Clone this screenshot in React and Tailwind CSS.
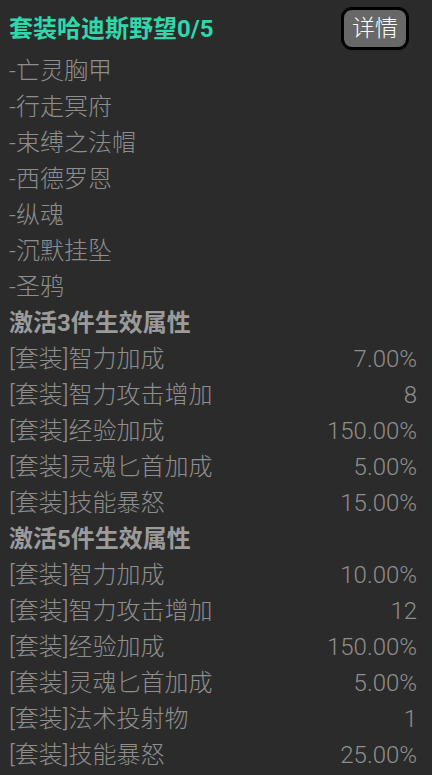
import React from 'react'

const pieces = ['亡灵胸甲', '行走冥府', '束缚之法帽', '西德罗恩', '纵魂', '沉默挂坠', '圣鸦']

const tiers = [
  {
    title: '激活3件生效属性',
    stats: [
      ['智力加成', '7.00%'],
      ['智力攻击增加', '8'],
      ['经验加成', '150.00%'],
      ['灵魂匕首加成', '5.00%'],
      ['技能暴怒', '15.00%'],
    ],
  },
  {
    title: '激活5件生效属性',
    stats: [
      ['智力加成', '10.00%'],
      ['智力攻击增加', '12'],
      ['经验加成', '150.00%'],
      ['灵魂匕首加成', '5.00%'],
      ['法术投射物', '1'],
      ['技能暴怒', '25.00%'],
    ],
  },
]

export default function App() {
  return (
    <div
      className="w-[432px] h-[775px] overflow-hidden bg-[#2b2b2b] pl-[9px] pr-[15px] text-[24px] leading-[36px] font-light text-[#8e8e8e]"
      style={{ fontFamily: 'Roboto, "Noto Sans CJK SC", sans-serif' }}
    >
      {/* Header */}
      <div className="flex h-[53px] items-center justify-between pt-[4px]">
        <span className="font-bold text-[#2fd8ab]">套装哈迪斯野望0/5</span>
        <button className="mr-[8px] flex h-[43px] w-[68px] items-center justify-center rounded-[11px] border-[3px] border-black bg-[#686868] text-[23px] font-light text-white">
          详情
        </button>
      </div>

      {/* Set pieces */}
      {pieces.map((p) => (
        <div key={p}>-{p}</div>
      ))}

      {/* Set bonuses */}
      {tiers.map((t) => (
        <div key={t.title}>
          <div className="font-bold text-[#9b9b9b]">{t.title}</div>
          {t.stats.map(([name, value]) => (
            <div key={name} className="flex justify-between">
              <span>[套装]{name}</span>
              <span>{value}</span>
            </div>
          ))}
        </div>
      ))}
    </div>
  )
}
